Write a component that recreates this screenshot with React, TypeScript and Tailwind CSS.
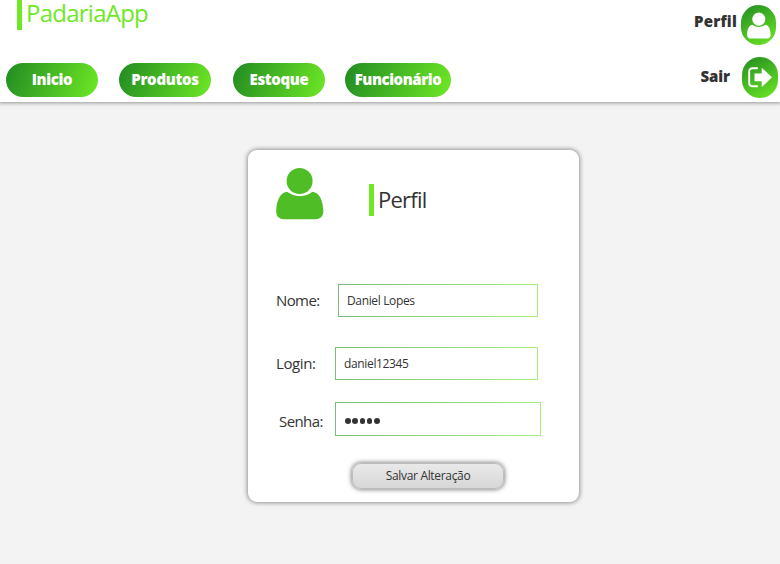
import React from "react";

const gradient = "bg-[linear-gradient(110deg,#228b22,#6ee825)]";
const roundGradient = "bg-[linear-gradient(150deg,#228b22,#6ee825)]";
const frame = "bg-[linear-gradient(100deg,#7dba7d,#a9ee7c)]";

function NavButton({ label, className }: { label: string; className: string }) {
  return (
    <button className={`flex h-[34px] items-center justify-center rounded-full pb-[2px] text-[15px] leading-[20px] font-extrabold text-white ${gradient} ${className}`}>
      {label}
    </button>
  );
}

function PersonIcon({ className }: { className: string }) {
  return (
    <svg viewBox="0 0 48 53" preserveAspectRatio="none" className={className} fill="currentColor">
      <circle cx="23.6" cy="14" r="13" />
      <path d="M11 24.8C3.8 25.4 .2 35 .2 44.5C.2 49.5 3.5 52.2 8 52.2H39.5C44 52.2 47.3 49.5 47.3 44.5C47.3 35 44 25.4 36.5 24.8C33 27.5 29 29.2 23.8 29.2C19 29.2 15 27.5 11 24.8Z" />
    </svg>
  );
}

function ExitIcon() {
  return (
    <svg viewBox="0 0 24 21" className="h-[21px] w-6" fill="none">
      <path d="M9.8 1.3H4.5Q1.2 1.3 1.2 4.5V16Q1.2 19.2 4.5 19.2H9.8" stroke="white" strokeWidth="1.9" />
      <path d="M6.5 6.5H13.7V.8L24 10.3L13.7 20.2V14.3H6.5Z" fill="white" />
    </svg>
  );
}

function Field({ value, className }: { value: string; className: string }) {
  return (
    <div className={`flex h-[33px] p-px ${frame} ${className}`}>
      <input type="text" defaultValue={value} className="w-full bg-white pl-2 text-[12px] tracking-[-0.35px] text-[#333] outline-none" />
    </div>
  );
}

export default function App() {
  return (
    <div className="h-[564px] w-[780px] overflow-hidden bg-[#f3f3f3] font-['Open_Sans','Noto_Sans',sans-serif] text-[#333]">
      <header className="flex h-[102px] justify-between bg-white shadow-[0_0_4px_1px_rgba(0,0,0,0.4)]">
        <div>
          <div className="ml-[17px] h-[30px] border-l-5 border-[#6ee825] pl-1">
            <h1 className="text-[24px] leading-[26px] tracking-[-0.75px] text-[#6ee825]">PadariaApp</h1>
          </div>
          <nav className="mt-[33px] ml-[6px] flex">
            <NavButton label="Inicio" className="w-[92px] tracking-[-0.35px]" />
            <NavButton label="Produtos" className="ml-[21px] w-[92px] tracking-[-0.3px]" />
            <NavButton label="Estoque" className="ml-[22px] w-[92px] tracking-[-0.35px]" />
            <NavButton label="Funcionário" className="ml-5 w-[106px] tracking-[-0.45px]" />
          </nav>
        </div>
        <div className="flex flex-col items-end pt-[5px]">
          <div className="mr-1 flex h-10">
            <span className="mr-1 pt-[6px] text-[15px] leading-[20px] font-extrabold tracking-[0.2px]">Perfil</span>
            <span className={`flex h-10 w-[35px] items-center justify-center rounded-full text-white ${roundGradient}`}>
              <PersonIcon className="h-[27px] w-6" />
            </span>
          </div>
          <div className="mt-3 mr-[2px] flex h-[41px]">
            <span className="mr-3 pt-[9px] text-[15px] leading-[20px] font-extrabold tracking-[-0.1px]">Sair</span>
            <span className={`flex h-[41px] w-9 items-center justify-center rounded-full ${roundGradient}`}>
              <ExitIcon />
            </span>
          </div>
        </div>
      </header>

      <main className="mt-12 ml-[248px] h-[352px] w-[331px] rounded-[9px] bg-white pt-[17px] shadow-[0_0_4px_1px_rgba(0,0,0,0.4)]">
        <div className="flex h-[53px]">
          <PersonIcon className="ml-7 h-[53px] w-12 text-[#4fbd26]" />
          <div className="mt-[17px] ml-[45px] h-8 border-l-5 border-[#6ee825] pl-1">
            <h2 className="text-[22px] leading-[31px] tracking-[-0.75px]">Perfil</h2>
          </div>
        </div>
        <div className="mt-[64px] ml-7 flex h-[33px] items-center text-[15px]">
          <label className="w-[62px] tracking-[-0.6px]">Nome:</label>
          <Field value="Daniel Lopes" className="w-[200px]" />
        </div>
        <div className="mt-[30px] ml-7 flex h-[33px] items-center text-[15px]">
          <label className="w-[59px] tracking-[-0.4px]">Login:</label>
          <Field value="daniel12345" className="w-[203px]" />
        </div>
        <div className="mt-[22px] ml-[31px] flex h-[34px] items-center text-[15px]">
          <label className="w-14 pt-[5px] tracking-[-0.6px]">Senha:</label>
          <div className={`h-[34px] w-[206px] p-px ${frame}`}>
            <div className="flex h-8 items-center gap-[1.8px] bg-white pt-[4px] pl-[9px]" role="textbox" aria-label="Senha">
              {[0, 1, 2, 3, 4].map((i) => (
                <span key={i} className="h-[5.5px] w-[5.5px] rounded-full bg-[#333]" />
              ))}
            </div>
          </div>
        </div>
        <button className="mt-[27px] ml-[104px] flex h-[26px] w-[152px] items-center justify-center rounded-[9px] border border-[#bcbcbc] bg-linear-to-b from-[#e9e9e9] to-[#d7d7d7] text-[12px] tracking-[-0.32px] shadow-[0_0_4px_1px_rgba(0,0,0,0.45)]">
          Salvar Alteração
        </button>
      </main>
    </div>
  );
}
